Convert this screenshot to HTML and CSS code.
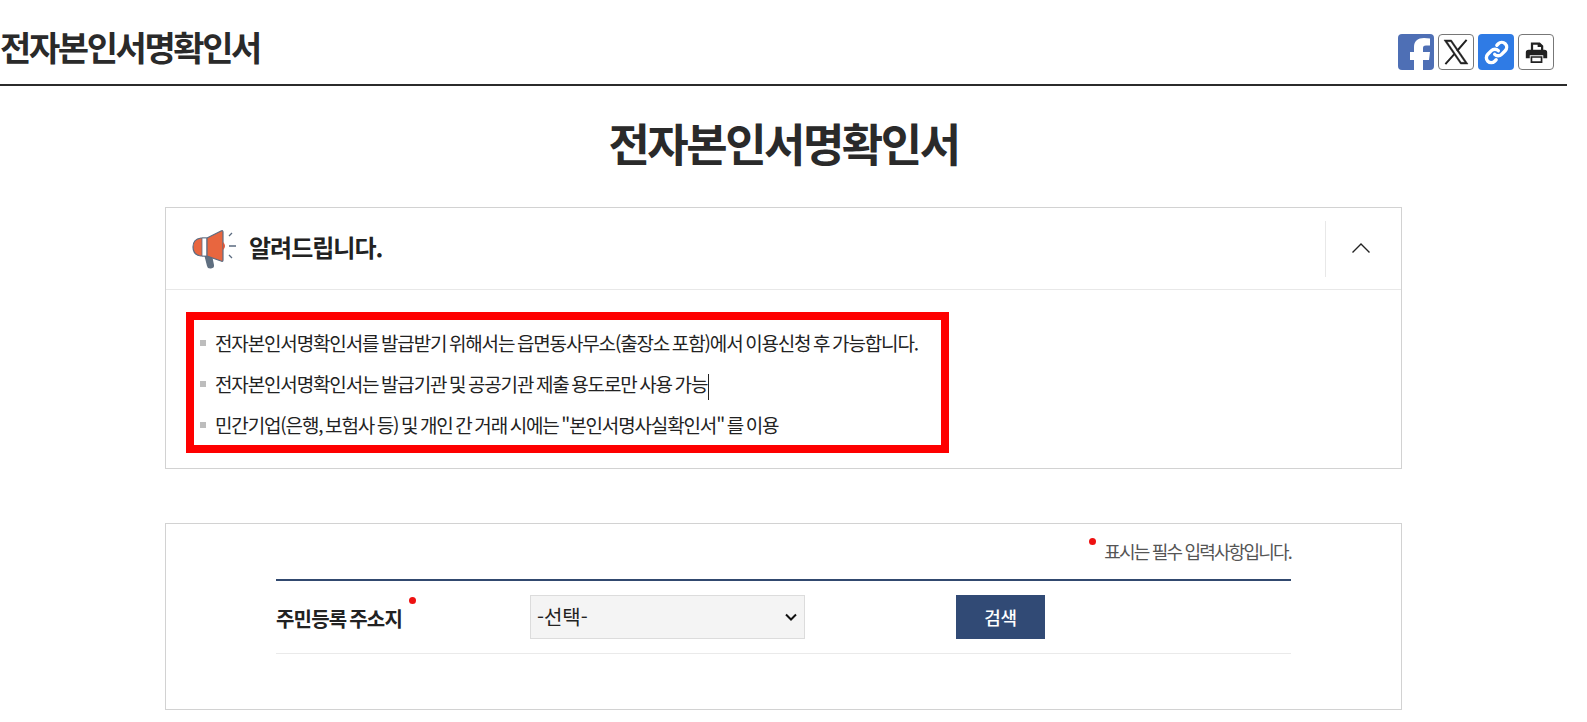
FILE: index.html
```html
<!DOCTYPE html>
<html lang="ko">
<head>
<meta charset="utf-8">
<title>전자본인서명확인서</title>
<link rel="stylesheet" href="styles.css">
</head>
<body>
<div class="page">
  <header class="top">
    <div class="top-title">전자본인서명확인서</div>
    <div class="shares">
      <a class="share fb"><svg viewBox="0 0 36 36" width="36" height="36"><path d="M16 36V26h-4v-8h4v-5C16 7 20 4 26 4c2 0 4 .2 6 .5v7h-4c-2.500 0-3 1-3 3V18h7l-1 8h-6v10z" fill="#fff"/></svg></a>
      <a class="share outline"><svg viewBox="0 0 24 24" width="34" height="34"><path d="M3.500 3.500h5.300l11.700 17h-5.300zM5.800 4.700l9.900 14.600h2.500L8.300 4.700z" fill="#222" fill-rule="evenodd" stroke="#222" stroke-width=".3"/><path d="M19.500 3.500l-6.800 7.800M10.800 13.500l-6.300 7" stroke="#222" stroke-width="1.400" fill="none"/></svg></a>
      <a class="share link"><svg viewBox="0 0 24 24" width="29" height="29" fill="none" stroke="#fff" stroke-width="2.800" stroke-linecap="round"><path d="M10.500 13.500a4 4 0 0 0 5.700 0l3-3a4 4 0 0 0-5.700-5.700l-1.200 1.200"/><path d="M13.500 10.500a4 4 0 0 0-5.700 0l-3 3a4 4 0 0 0 5.700 5.700l1.200-1.200"/></svg></a>
      <a class="share outline"><svg viewBox="0 0 24 24" width="27" height="27"><path d="M7 3h8l3 3v4h-2V7h-3V5H9v5H7z" fill="#222"/><path d="M5 9.500h14a2.500 2.500 0 0 1 2.500 2.500v5H18v-2.500H6V17H2.500v-5A2.500 2.500 0 0 1 5 9.500z" fill="#222"/><path d="M7.500 16h9v4.500h-9z" fill="#fff" stroke="#222" stroke-width="1.500"/></svg></a>
    </div>
  </header>

  <h1 class="main-title">전자본인서명확인서</h1>

  <section class="card notice">
    <div class="notice-head">
      <div class="notice-label">
        <svg class="horn" viewBox="0 0 44 44" width="44" height="44">
          <path d="M12 27l8 1 2 10q.5 3-3 3.500t-4-2.500z" fill="#5f6f80"/>
          <path d="M9 11h5v18H9q-8-1-8-9t8-9z" fill="#e8663f" stroke="#5b6b80" stroke-width="1.200"/>
          <path d="M10 11h5v18h-5z" fill="#fff" stroke="#5b6b80" stroke-width=".8"/>
          <path d="M15 11L29 4q2-1 2 1v28q0 2-2 1l-14-5z" fill="#e8663f" stroke="#5b6b80" stroke-width="1.200"/>
          <path d="M31 15q4 4 0 8z" fill="#d9553a"/>
          <path d="M37 9l3-3M37 19h7M37 28l3 3" stroke="#5b6b80" stroke-width="1.300" fill="none"/>
        </svg>
        <span class="notice-text">알려드립니다.</span>
      </div>
      <button class="collapse" aria-label="접기"><svg viewBox="0 0 20 12" width="20" height="12"><path d="M1.500 10.500L10 2l8.500 8.500" fill="none" stroke="#222" stroke-width="1.400"/></svg></button>
    </div>
    <ul class="notice-list">
      <li>전자본인서명확인서를 발급받기 위해서는 읍면동사무소(출장소 포함)에서 이용신청 후 가능합니다.</li>
      <li>전자본인서명확인서는 발급기관 및 공공기관 제출 용도로만 사용 가능<span class="caret"></span></li>
      <li>민간기업(은행, 보험사 등) 및 개인 간 거래 시에는 "본인서명사실확인서" 를 이용</li>
    </ul>
    <div class="highlight"></div>
  </section>

  <section class="card form-card">
    <div class="form-inner">
      <p class="legend"><span class="dot legend-dot"></span>표시는 필수 입력사항입니다.</p>
      <div class="form-row">
        <label class="form-label" for="addr">주민등록 주소지<span class="dot label-dot"></span></label>
        <select class="form-select" id="addr"><option>-선택-</option></select>
        <button class="search">검색</button>
      </div>
    </div>
  </section>
</div>
</body>
</html>
```
FILE: styles.css
```css
* { box-sizing: border-box; }
html, body { margin: 0; padding: 0; background: #fff; overflow: hidden; }
body { font-family: "Noto Sans CJK KR", "Noto Sans", sans-serif; color: #222; }
.page { width: 1567px; height: 722px; }

.top { height: 86px; border-bottom: 2px solid #2b2b2b; display: flex; justify-content: space-between; align-items: flex-start; }
.top-title { font-size: 34px; font-weight: 700; letter-spacing: -2.4px; line-height: 40px; margin-top: 27px; color: #2a2a2a; }
.shares { display: flex; gap: 4px; margin: 34px 13px 0 0; }
.share { width: 36px; height: 36px; border-radius: 4px; display: flex; align-items: center; justify-content: center; overflow: hidden; }
.fb { background: #4e6fb5; }
.link { background: #2f7be5; }
.outline { border: 1px solid #777; background: #fff; }

.main-title { margin: 31px 0 0; text-align: center; font-size: 45px; font-weight: 700; letter-spacing: -2.5px; line-height: 52px; color: #2a2a2a; }

.card { margin-left: 165px; width: 1237px; border: 1px solid #d2d2d2; background: #fff; position: relative; }
.notice { margin-top: 38px; height: 262px; }
.notice-head { height: 82px; border-bottom: 1px solid #e8e8e8; display: flex; justify-content: space-between; align-items: center; padding-left: 26px; }
.notice-label { display: flex; align-items: center; gap: 13px; }
.notice-text { font-size: 24px; font-weight: 700; letter-spacing: -1px; line-height: 34px; color: #222; padding-bottom: 3px; }
.collapse { width: 76px; height: 56px; border: 0; border-left: 1px solid #e8e8e8; background: none; padding: 0 6px 2px 0; display: flex; align-items: center; justify-content: center; }

.notice-list { list-style: none; margin: 0; padding: 32px 0 0 34px; }
.notice-list li { position: relative; padding-left: 15px; height: 41px; line-height: 41px; font-size: 19px; letter-spacing: -1.15px; word-spacing: -1.5px; color: #222; white-space: nowrap; }
.notice-list li::before { content: ""; position: absolute; left: 0; top: 18px; width: 6px; height: 6px; background: #bdbdbd; }
.caret { display: inline-block; width: 1px; height: 26px; background: #222; vertical-align: middle; margin-left: 1px; }
.highlight { position: absolute; left: 20px; top: 104px; width: 763px; height: 141px; border: 8px solid #fe0000; pointer-events: none; }

.form-card { margin-top: 54px; height: 187px; }
.form-inner { margin: 0 110px; }
.legend { margin: 0; height: 57px; padding-top: 13px; text-align: right; font-size: 18px; line-height: 28px; letter-spacing: -1.8px; color: #555; white-space: nowrap; border-bottom: 2px solid #31496f; position: relative; }
.dot { display: inline-block; width: 7px; height: 7px; border-radius: 50%; background: #ee1111; position: absolute; }
.legend-dot { right: 195px; top: 14px; }
.form-row { display: flex; align-items: center; height: 73px; border-bottom: 1px solid #eaeaea; padding-bottom: 1px; }
.form-label { position: relative; width: 254px; font-size: 20px; font-weight: 700; letter-spacing: -.8px; word-spacing: -2px; color: #222; flex: none; padding: 3px 0 0; }
.label-dot { left: 133px; top: -4px; }
.form-select { appearance: none; width: 275px; height: 44px; background: #f4f4f4 url("data:image/svg+xml,%3Csvg xmlns='http://www.w3.org/2000/svg' width='12' height='8'%3E%3Cpath d='M1 1.500l5 5 5-5' fill='none' stroke='%23111' stroke-width='2'/%3E%3C/svg%3E") no-repeat right 7px center; border: 1px solid #dcdcdc; border-radius: 0; font-family: inherit; font-size: 20px; color: #222; padding-left: 6px; flex: none; }
.search { margin-left: 151px; width: 89px; height: 44px; background: #314a75; color: #fff; border: 0; font-family: inherit; font-size: 18px; font-weight: 500; letter-spacing: -.2px; }
```
